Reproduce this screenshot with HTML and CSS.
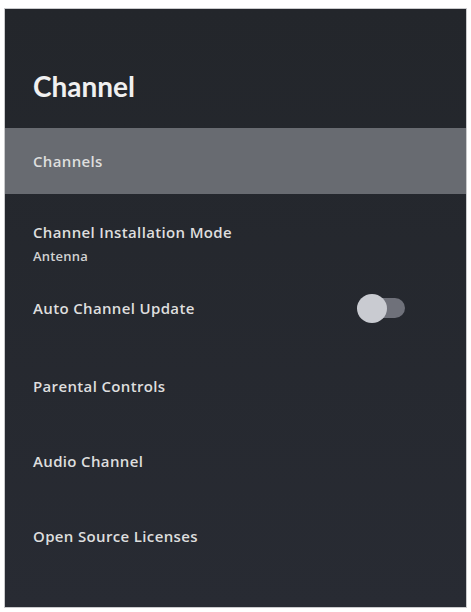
FILE: index.html
```html
<!DOCTYPE html>
<html lang="en">
<head>
<meta charset="utf-8">
<title>Channel</title>
<link rel="stylesheet" href="styles.css">
</head>
<body>
<div class="panel">
  <header class="header">
    <h1 class="title">Channel</h1>
  </header>
  <div class="item item-selected">Channels</div>
  <ul class="list">
    <li class="entry entry-install">
      <div class="entry-label">Channel Installation Mode</div>
      <div class="entry-sub">Antenna</div>
    </li>
    <li class="entry entry-toggle">
      <div class="entry-label">Auto Channel Update</div>
      <div class="toggle"><span class="toggle-track"></span><span class="toggle-knob"></span></div>
    </li>
    <li class="entry entry-gap"><div class="entry-label">Parental Controls</div></li>
    <li class="entry entry-gap"><div class="entry-label">Audio Channel</div></li>
    <li class="entry entry-gap"><div class="entry-label">Open Source Licenses</div></li>
  </ul>
</div>
</body>
</html>
```
FILE: styles.css
```css
html, body {
  margin: 0;
  padding: 0;
  background: #ffffff;
}
body {
  font-family: "Open Sans", "Liberation Sans", sans-serif;
  padding: 9px 5px 5px 5px;
}
.panel {
  width: 461px;
  height: 598px;
  background: linear-gradient(#23262b, #282b33);
  box-shadow: 0 0 0 1px #c9cacc;
  overflow: hidden;
}
.header {
  padding: 58px 28px 23px 28px;
}
.title {
  margin: 0;
  font-family: Lato, "Open Sans", sans-serif;
  font-size: 28px;
  line-height: 38px;
  font-weight: 700;
  color: #f0f0f0;
}
.item {
  font-size: 15px;
  line-height: 20px;
  font-weight: 600;
  letter-spacing: 0.35px;
  color: #dedede;
}
.item-selected {
  background: #686b71;
  padding: 23px 28px;
}
.list {
  list-style: none;
  margin: 0;
  padding: 28px 61px 0 28px;
}
.entry-label {
  font-size: 15px;
  line-height: 20px;
  font-weight: 600;
  letter-spacing: 0.35px;
  color: #dedede;
}
.entry-sub {
  margin-top: 6px;
  font-size: 13px;
  line-height: 16px;
  font-weight: 600;
  letter-spacing: 0.2px;
  color: #d2d2d2;
}
.entry-toggle {
  margin-top: 30px;
  height: 28px;
  display: flex;
  align-items: center;
  justify-content: space-between;
}
.entry-gap {
  margin-top: 55px;
}
.entry-toggle + .entry-gap {
  margin-top: 54px;
}
.toggle {
  position: relative;
  width: 48px;
  height: 28px;
}
.toggle-track {
  position: absolute;
  left: 10px;
  top: 4px;
  width: 38px;
  height: 20px;
  border-radius: 10px;
  background: #6f717a;
}
.toggle-knob {
  position: absolute;
  left: 0;
  top: 0;
  width: 30px;
  height: 29px;
  border-radius: 50%;
  background: #c9cbd1;
}
```
